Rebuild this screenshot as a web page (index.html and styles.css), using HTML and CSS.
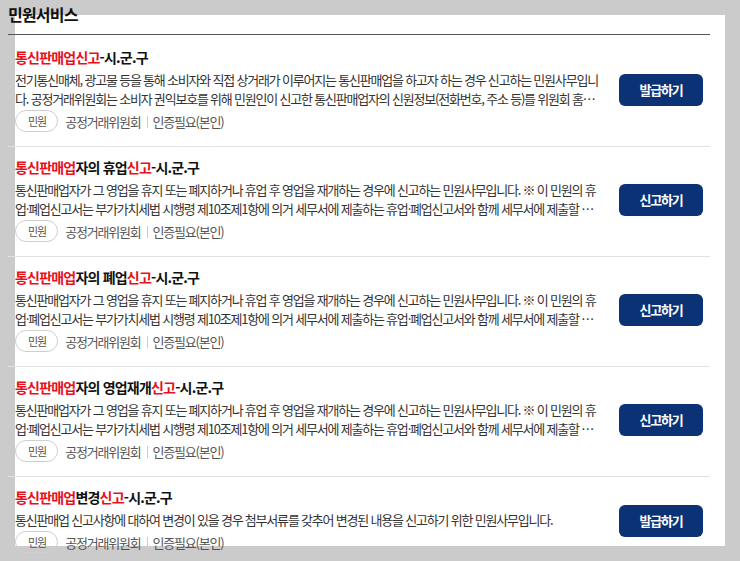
FILE: index.html
```html
<!DOCTYPE html>
<html lang="ko">

<head>
    <meta charset="UTF-8">
    <meta name="viewport" content="width=device-width, initial-scale=1.0">
    <title>민원서비스</title>
    <link rel="stylesheet" href="styles.css">
</head>

<body>
    <div class="service">
        <h2 class="service-title">민원서비스</h2>
        <ul class="service-list">
            <li class="service-item">
                <div class="service-info">
                    <p class="service-name"><em>통신판매업신고</em>-시.군.구</p>
                    <p class="service-desc">전기통신매체, 광고물 등을 통해 소비자와 직접 상거래가 이루어지는 통신판매업을 하고자 하는 경우 신고하는 민원사무입니다. 공정거래위원회는 소비자 권익보호를 위해 민원인이 신고한 통신판매업자의 신원정보(전화번호, 주소 등)를 위원회 홈페이지에 공개하고 있습니다.</p>
                    <div class="service-meta">
                        <span class="tag">민원</span>
                        <span class="org">공정거래위원회</span>
                        <span class="auth">인증필요(본인)</span>
                    </div>
                </div>
                <a href="#" class="service-btn">발급하기</a>
            </li>
            <li class="service-item">
                <div class="service-info">
                    <p class="service-name"><em>통신판매업</em>자의 휴업<em>신고</em>-시.군.구</p>
                    <p class="service-desc">통신판매업자가 그 영업을 휴지 또는 폐지하거나 휴업 후 영업을 재개하는 경우에 신고하는 민원사무입니다. ※ 이 민원의 휴업·폐업신고서는 부가가치세법 시행령 제10조제1항에 의거 세무서에 제출하는 휴업·폐업신고서와 함께 세무서에 제출할 수 있습니다.</p>
                    <div class="service-meta">
                        <span class="tag">민원</span>
                        <span class="org">공정거래위원회</span>
                        <span class="auth">인증필요(본인)</span>
                    </div>
                </div>
                <a href="#" class="service-btn">신고하기</a>
            </li>
            <li class="service-item">
                <div class="service-info">
                    <p class="service-name"><em>통신판매업</em>자의 폐업<em>신고</em>-시.군.구</p>
                    <p class="service-desc">통신판매업자가 그 영업을 휴지 또는 폐지하거나 휴업 후 영업을 재개하는 경우에 신고하는 민원사무입니다. ※ 이 민원의 휴업·폐업신고서는 부가가치세법 시행령 제10조제1항에 의거 세무서에 제출하는 휴업·폐업신고서와 함께 세무서에 제출할 수 있습니다.</p>
                    <div class="service-meta">
                        <span class="tag">민원</span>
                        <span class="org">공정거래위원회</span>
                        <span class="auth">인증필요(본인)</span>
                    </div>
                </div>
                <a href="#" class="service-btn">신고하기</a>
            </li>
            <li class="service-item">
                <div class="service-info">
                    <p class="service-name"><em>통신판매업</em>자의 영업재개<em>신고</em>-시.군.구</p>
                    <p class="service-desc">통신판매업자가 그 영업을 휴지 또는 폐지하거나 휴업 후 영업을 재개하는 경우에 신고하는 민원사무입니다. ※ 이 민원의 휴업·폐업신고서는 부가가치세법 시행령 제10조제1항에 의거 세무서에 제출하는 휴업·폐업신고서와 함께 세무서에 제출할 수 있습니다.</p>
                    <div class="service-meta">
                        <span class="tag">민원</span>
                        <span class="org">공정거래위원회</span>
                        <span class="auth">인증필요(본인)</span>
                    </div>
                </div>
                <a href="#" class="service-btn">신고하기</a>
            </li>
            <li class="service-item">
                <div class="service-info">
                    <p class="service-name"><em>통신판매업</em>변경<em>신고</em>-시.군.구</p>
                    <p class="service-desc">통신판매업 신고사항에 대하여 변경이 있을 경우 첨부서류를 갖추어 변경된 내용을 신고하기 위한 민원사무입니다.</p>
                    <div class="service-meta">
                        <span class="tag">민원</span>
                        <span class="org">공정거래위원회</span>
                        <span class="auth">인증필요(본인)</span>
                    </div>
                </div>
                <a href="#" class="service-btn">발급하기</a>
            </li>
        </ul>
    </div>
</body>

</html>
```

FILE: styles.css
```css
html {
    /* grey frame with the white sheet behind the list */
    background: #cbcbcb linear-gradient(#fff, #fff) 15px 15px / 710px 531px no-repeat;
}

body {
    font-family: 'Noto Sans CJK KR', sans-serif;
    margin: 0;
    overflow: hidden;
    color: #333;
}

.service {
    width: 702px;
    margin-left: 8px;
}

.service-title {
    margin: 0;
    padding: 4px 0 10px;
    font-size: 16px;
    line-height: 20px;
    letter-spacing: -0.8px;
    color: #111;
    border-bottom: 1px solid #555;
}

.service-list {
    list-style: none;
    margin: 0;
    padding: 0;
}

.service-item {
    display: flex;
    align-items: center;
    padding: 11px 7px 14px;
    border-bottom: 1px solid #e2e2e2;
}

.service-item:first-child {
    padding-top: 13px;
}

.service-info {
    flex: 1;
    min-width: 0;
    margin-right: 19px;
}

.service-name {
    margin: 0;
    font-size: 14px;
    font-weight: bold;
    line-height: 18px;
    letter-spacing: -0.8px;
    color: #111;
}

.service-name em {
    font-style: normal;
    color: #e8101c;
}

.service-desc {
    margin: 4px 0 0;
    font-size: 13px;
    line-height: 19px;
    letter-spacing: -1.2px;
    color: #333;
    display: -webkit-box;
    -webkit-line-clamp: 2;
    -webkit-box-orient: vertical;
    overflow: hidden;
}

.service-meta {
    display: flex;
    align-items: center;
    margin-top: 2px;
    height: 22px;
    font-size: 13px;
    line-height: 19px;
    letter-spacing: -1.2px;
    color: #555;
}

.tag {
    display: inline-block;
    height: 20px;
    line-height: 20px;
    padding: 0 11px 0 12px;
    margin-right: 7px;
    font-size: 11px;
    letter-spacing: -1px;
    border: 1px solid #cfcfcf;
    border-radius: 11px;
    color: #555;
}

.auth::before {
    content: "";
    display: inline-block;
    width: 1px;
    height: 12px;
    margin: 0 5px 0 6px;
    vertical-align: -1px;
    background-color: #ccc;
}

.service-btn {
    flex: none;
    width: 84px;
    height: 32px;
    line-height: 32px;
    text-align: center;
    font-size: 13px;
    font-weight: bold;
    letter-spacing: -1.2px;
    color: #fff;
    text-decoration: none;
    background-color: #0b3275;
    border-radius: 6px;
}
```
